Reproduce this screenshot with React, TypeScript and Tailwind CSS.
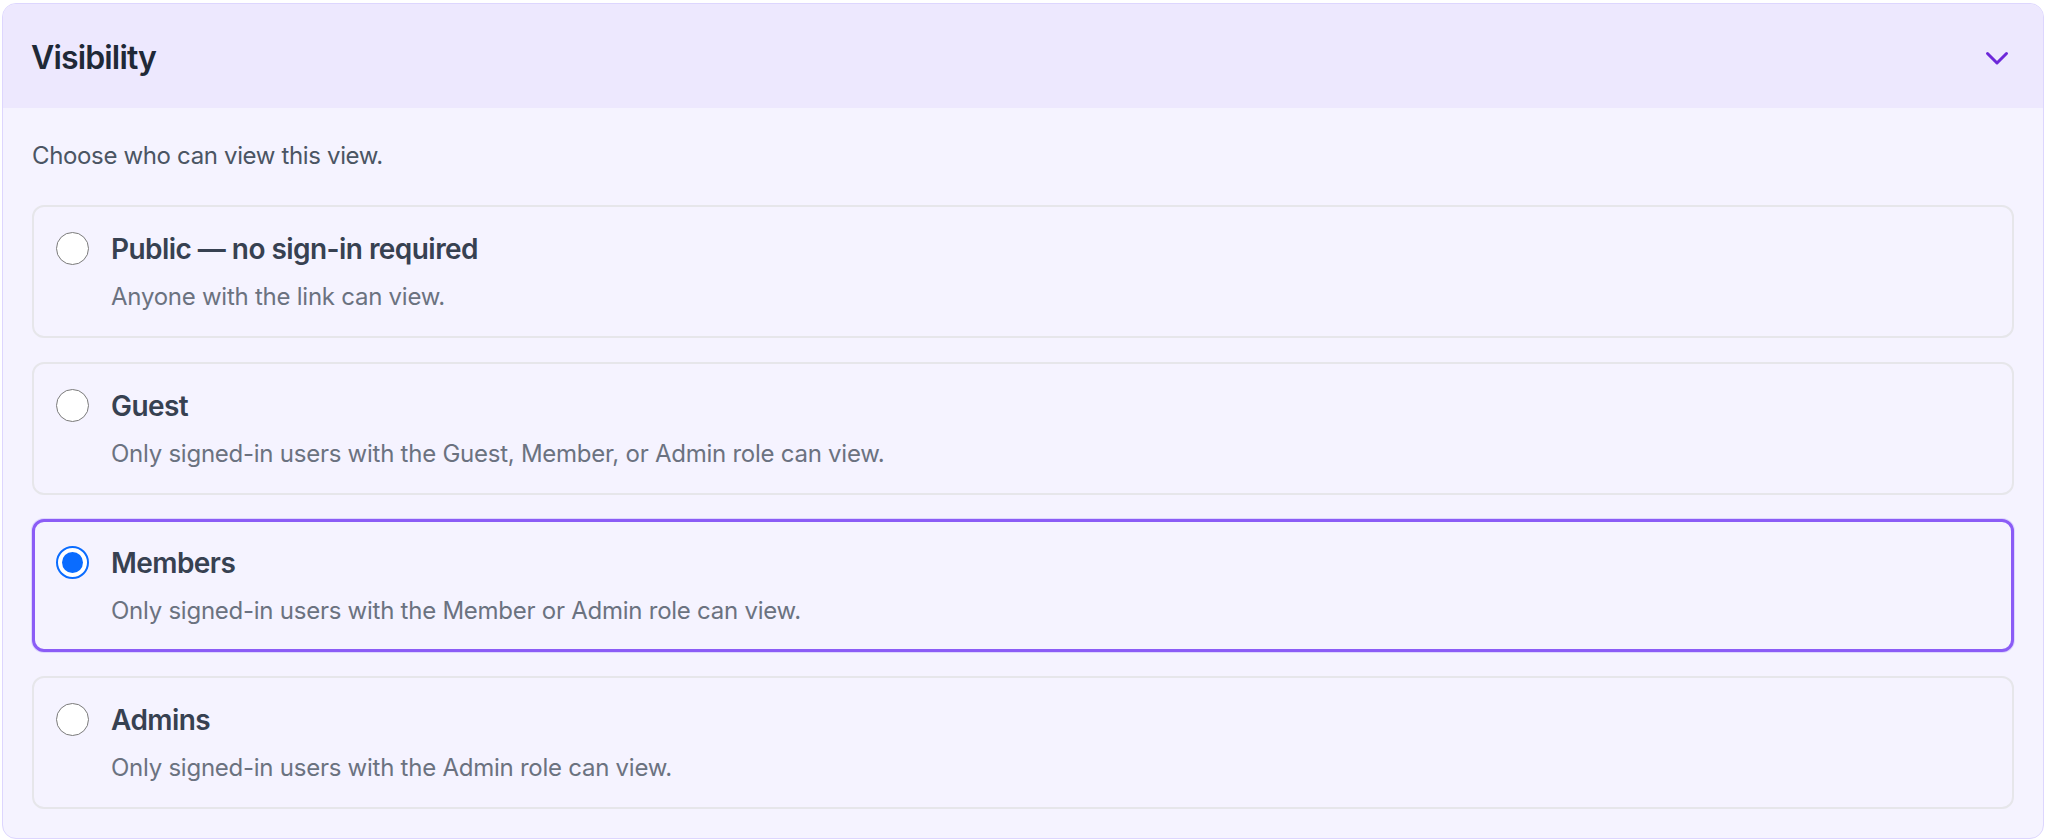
import React from "react";

type Option = { id: string; label: string; desc: string };

const options: Option[] = [
  { id: "public", label: "Public — no sign-in required", desc: "Anyone with the link can view." },
  { id: "guest", label: "Guest", desc: "Only signed-in users with the Guest, Member, or Admin role can view." },
  { id: "members", label: "Members", desc: "Only signed-in users with the Member or Admin role can view." },
  { id: "admins", label: "Admins", desc: "Only signed-in users with the Admin role can view." },
];

function Radio({ checked }: { checked: boolean }) {
  if (checked) {
    return (
      <span className="flex h-[33px] w-[33px] shrink-0 items-center justify-center rounded-full border-2 border-[#0a6cff] bg-white">
        <span className="block h-[21px] w-[21px] rounded-full bg-[#0a6cff]" />
      </span>
    );
  }
  return <span className="block h-[33px] w-[33px] shrink-0 rounded-full border border-[#7a7a7a] bg-white" />;
}

export default function App() {
  const selected = "members";
  return (
    <div className="h-[840px] w-full bg-white pt-[3px] pl-[2px] pr-[4px]" style={{ fontFamily: "Inter, 'Noto Sans', sans-serif" }}>
      <div className="flex h-[836px] flex-col overflow-hidden rounded-[14px] border border-[#ddd6fe] bg-[#f5f3ff]">
        <div className="flex h-[104px] shrink-0 items-center justify-between bg-[#ede8fe] pl-[28px] pr-[34px] pt-[4px]">
          <h2 className="text-[32px] font-semibold leading-[40px] tracking-[-0.85px] text-[#1f2937]">Visibility</h2>
          <svg width="24" height="15" viewBox="0 0 24 15" fill="none">
            <path d="M2.5 2.5 L12 12 L21.5 2.5" stroke="#6d28d9" strokeWidth="3" strokeLinecap="round" strokeLinejoin="round" />
          </svg>
        </div>
        <div className="flex flex-col px-[29px] pt-[32px]">
          <p className="text-[24px] leading-[32px] tracking-[-0.35px] text-[#4b5563]">Choose who can view this view.</p>
          <div className="mt-[33px] flex flex-col gap-[24px]">
            {options.map((o) => {
              const isSel = o.id === selected;
              return (
                <div
                  key={o.id}
                  className={
                    isSel
                      ? "flex h-[133px] items-start gap-[22px] rounded-[12px] border-[3px] border-[#8b5cf6] bg-[#f5f3ff] pl-[21px] pt-[23px] shadow-[0_0_0_1px_#ddd6fe]"
                      : "flex h-[133px] items-start gap-[22px] rounded-[12px] border-2 border-[#e6e6ea] bg-[#f5f3ff] pl-[22px] pt-[24px]"
                  }
                >
                  <span className="mt-[1px]">
                    <Radio checked={isSel} />
                  </span>
                  <div className="flex flex-col">
                    <span className="text-[28px] font-semibold leading-[36px] tracking-[-0.55px] text-[#374151]">{o.label}</span>
                    <span className="mt-[14px] text-[24px] leading-[32px] tracking-[-0.25px] text-[#6b7280]">{o.desc}</span>
                  </div>
                </div>
              );
            })}
          </div>
        </div>
      </div>
    </div>
  );
}
